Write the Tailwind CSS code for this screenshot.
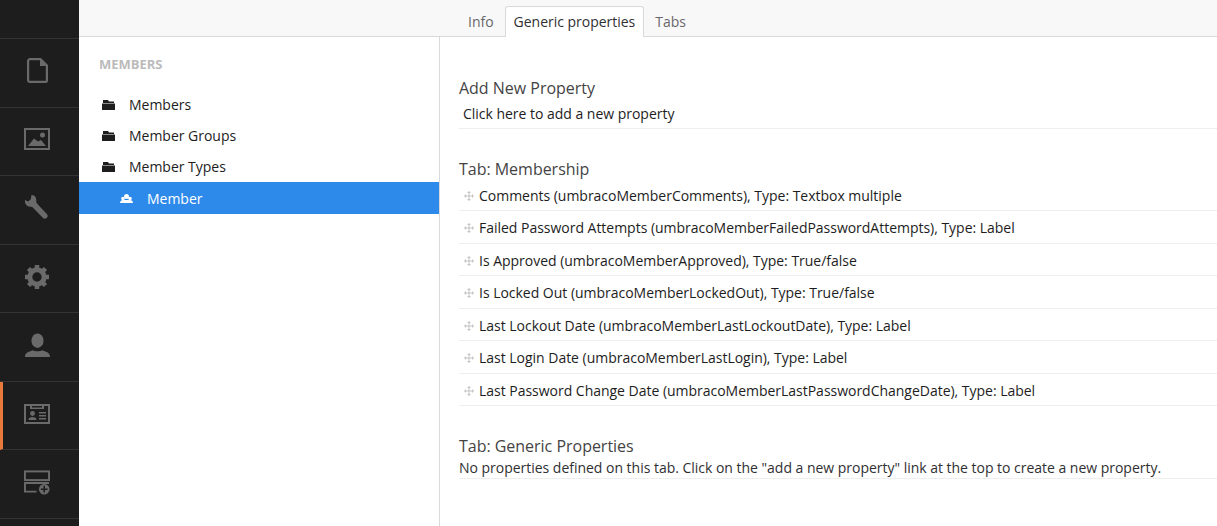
<!DOCTYPE html>
<html lang="en">
<head>
  <meta charset="UTF-8">
  <title>Member Types</title>
  <script src="https://cdn.jsdelivr.net/npm/@tailwindcss/browser@4"></script>
</head>
<body class="h-[526px] w-[1217px] overflow-hidden bg-white font-['Open_Sans',sans-serif] text-sm tracking-[-0.02px] text-[#303033]">
  <div class="flex h-full">
    <!-- Main nav -->
    <nav class="w-[79px] shrink-0 bg-[#1d1d1d] text-[#6a6a6a]">
      <div class="h-[39px] border-b border-[#333]"></div>
      <a class="flex h-[68.5px] items-center justify-center border-b border-[#333] pr-[5px] pb-[4px]">
        <svg width="21" height="25" viewBox="0 0 21 25" fill="none" stroke="currentColor" stroke-width="2.2"><path d="M3 1.100h10.500l6.400 6.400V22.500a1.400 1.400 0 0 1-1.400 1.400H3a1.900 1.900 0 0 1-1.900-1.400V3A1.900 1.900 0 0 1 3 1.100z"/><path d="M13 1.500v6.500h6.500" fill="currentColor" stroke="none"/></svg>
      </a>
      <a class="flex h-[68.5px] items-center justify-center border-b border-[#333] pr-[5px] pb-[4px]">
        <svg width="26" height="22" viewBox="0 0 26 22"><rect x="1" y="1" width="24" height="20" fill="none" stroke="currentColor" stroke-width="2"/><circle cx="18.500" cy="7" r="2.500" fill="currentColor"/><path d="M4 18l6-7.500 4 3 3-1.500 5 6z" fill="currentColor"/></svg>
      </a>
      <a class="flex h-[68.5px] items-center justify-center border-b border-[#333] pr-[5px] pb-[5px]">
        <svg width="26" height="26" viewBox="0 0 26 26" fill="currentColor"><path d="M7.500 1L6.800 5.300 4.300 7.600 1 6C.4 9.500 2.800 13 6.800 12.700c1 0 1.500.3 2.200 1L19 24c1 1 2.500 1 3.700 0s1.400-2.600.3-3.700L13 9.500c-.6-.7-.8-1.300-.7-2.200C12.500 4 11 1 7.500 1z"/></svg>
      </a>
      <a class="flex h-[68.5px] items-center justify-center border-b border-[#333] pr-[5px] pb-[2px]">
        <svg width="26" height="26" viewBox="0 0 26 26"><circle cx="13" cy="13" r="7.200" fill="none" stroke="currentColor" stroke-width="5"/><path d="M13 1v24M1 13h24M4.500 4.500l17 17M21.500 4.500l-17 17" stroke="currentColor" stroke-width="4.500" stroke-dasharray="4.500 15 4.500" fill="none"/></svg>
      </a>
      <a class="flex h-[68.5px] items-center justify-center border-b border-[#333] pr-[5px] pb-[2px]">
        <svg width="25" height="25" viewBox="0 0 26 25" fill="currentColor"><ellipse cx="13" cy="7.500" rx="6.300" ry="7.500"/><path d="M0 24.500c0-5 5-5.500 8-7 2 1.300 8 1.300 10 0 3 1.500 8 2 8 7z"/></svg>
      </a>
      <a class="flex h-[68.5px] items-center justify-center border-b border-l-[3px] border-b-[#333] border-l-[#e87b3c] pr-[8px] pb-[3px]">
        <svg width="26" height="20" viewBox="0 0 26 20" fill="currentColor"><path d="M1 1h24v18H1z" fill="none" stroke="currentColor" stroke-width="2"/><path d="M6 1h2v2.500h10V1h2v4H6z"/><circle cx="8.500" cy="9.500" r="2.400"/><path d="M4.500 16c0-2.500 2-2.500 4-3 2 .5 4 .5 4 3z"/><path d="M15 8h7v1.500h-7zM15 11h7v1.500h-7zM15 14h7v1.500h-7z"/></svg>
      </a>
      <a class="flex h-[68.5px] items-center justify-center border-b border-[#333] pr-[5px] pb-[3px]">
        <svg width="26" height="25" viewBox="0 0 27 25"><rect x="1" y="1" width="25" height="9" fill="none" stroke="currentColor" stroke-width="2"/><path d="M26 13H1v9h12" fill="none" stroke="currentColor" stroke-width="2"/><circle cx="21" cy="19.500" r="5.500" fill="currentColor"/><path d="M21 16v7M17.500 19.500h7" stroke="#1d1d1d" stroke-width="1.600"/></svg>
      </a>
    </nav>

    <div class="flex min-w-0 flex-1 flex-col">
      <!-- Tabs bar -->
      <div class="flex h-[37px] shrink-0 border-b border-[#d9d9d9] bg-[#f8f8f8]">
        <div class="w-[360px] shrink-0"></div>
        <ul class="flex items-end pl-[29px]">
          <li class="flex h-[31px] items-center pt-[2px] pr-[11px] text-[#68676b]">Info</li>
          <li class="-mb-px flex h-[31px] items-center rounded-t-[3px] border border-b-0 border-[#d9d9d9] bg-white px-2 text-[#303033]">Generic properties</li>
          <li class="flex h-[31px] items-center pt-[2px] pl-[11px] text-[#68676b]">Tabs</li>
        </ul>
      </div>

      <div class="flex min-h-0 flex-1">
        <!-- Tree -->
        <aside class="w-[361px] shrink-0 border-r border-[#d9d9d9]">
          <h5 class="pt-[19px] pl-5 text-[13px] leading-4 font-bold text-[#bbb]">MEMBERS</h5>
          <ul class="mt-[17px]">
            <li class="flex h-[31px] items-center pl-[23px]">
              <svg width="13" height="11" viewBox="0 0 13 11" fill="#1d1d1d"><path d="M1 1h5l1 1.500h5V4H1zM0 4.500h13V11H0z"/></svg>
              <span class="ml-[14px] text-[#1d1d1d]">Members</span>
            </li>
            <li class="flex h-[31px] items-center pl-[23px]">
              <svg width="13" height="11" viewBox="0 0 13 11" fill="#1d1d1d"><path d="M1 1h5l1 1.500h5V4H1zM0 4.500h13V11H0z"/></svg>
              <span class="ml-[14px] text-[#1d1d1d]">Member Groups</span>
            </li>
            <li class="flex h-[31px] items-center pl-[23px]">
              <svg width="13" height="11" viewBox="0 0 13 11" fill="#1d1d1d"><path d="M1 1h5l1 1.500h5V4H1zM0 4.500h13V11H0z"/></svg>
              <span class="ml-[14px] text-[#1d1d1d]">Member Types</span>
            </li>
            <li class="flex h-[32px] items-center bg-[#2e8aea] pt-[1px] pl-[41px] text-white">
              <svg width="13" height="9" viewBox="0 0 13 9" fill="#fff"><circle cx="6.500" cy="2.500" r="2.500"/><circle cx="3" cy="4.500" r="1.800"/><circle cx="10" cy="4.500" r="1.800"/><path d="M0 9c0-2 1.500-3 3-3h7c1.500 0 3 1 3 3z"/></svg>
              <span class="ml-[14px]">Member</span>
            </li>
          </ul>
        </aside>

        <!-- Properties -->
        <main class="min-w-0 flex-1 pl-[19px]">
          <h5 class="pt-[41px] text-base leading-5 text-[#444]">Add New Property</h5>
          <div class="flex h-[31px] items-center border-b border-[#eee] pt-[1px] pl-1 text-[#1d1d1d]">Click here to add a new property</div>

          <h5 class="pt-[30px] text-base leading-5 text-[#444]">Tab: Membership</h5>
          <ul class="-mt-[0.5px] text-[#1d1d1d]">
            <li class="flex h-[32.5px] items-center gap-[5px] border-b border-[#eee] pt-[3px] pl-[5px]"><svg width="10" height="10" viewBox="0 0 10 10" fill="none" stroke="#c4c4c4"><path d="M5 0v10M0 5h10M3.500 1.500h3M3.500 8.500h3M1.500 3.500v3M8.500 3.500v3"/></svg>Comments (umbracoMemberComments), Type: Textbox multiple</li>
            <li class="flex h-[32.5px] items-center gap-[5px] border-b border-[#eee] pt-[3px] pl-[5px]"><svg width="10" height="10" viewBox="0 0 10 10" fill="none" stroke="#c4c4c4"><path d="M5 0v10M0 5h10M3.500 1.500h3M3.500 8.500h3M1.500 3.500v3M8.500 3.500v3"/></svg>Failed Password Attempts (umbracoMemberFailedPasswordAttempts), Type: Label</li>
            <li class="flex h-[32.5px] items-center gap-[5px] border-b border-[#eee] pt-[3px] pl-[5px]"><svg width="10" height="10" viewBox="0 0 10 10" fill="none" stroke="#c4c4c4"><path d="M5 0v10M0 5h10M3.500 1.500h3M3.500 8.500h3M1.500 3.500v3M8.500 3.500v3"/></svg>Is Approved (umbracoMemberApproved), Type: True/false</li>
            <li class="flex h-[32.5px] items-center gap-[5px] border-b border-[#eee] pt-[3px] pl-[5px]"><svg width="10" height="10" viewBox="0 0 10 10" fill="none" stroke="#c4c4c4"><path d="M5 0v10M0 5h10M3.500 1.500h3M3.500 8.500h3M1.500 3.500v3M8.500 3.500v3"/></svg>Is Locked Out (umbracoMemberLockedOut), Type: True/false</li>
            <li class="flex h-[32.5px] items-center gap-[5px] border-b border-[#eee] pt-[3px] pl-[5px]"><svg width="10" height="10" viewBox="0 0 10 10" fill="none" stroke="#c4c4c4"><path d="M5 0v10M0 5h10M3.500 1.500h3M3.500 8.500h3M1.500 3.500v3M8.500 3.500v3"/></svg>Last Lockout Date (umbracoMemberLastLockoutDate), Type: Label</li>
            <li class="flex h-[32.5px] items-center gap-[5px] border-b border-[#eee] pt-[3px] pl-[5px]"><svg width="10" height="10" viewBox="0 0 10 10" fill="none" stroke="#c4c4c4"><path d="M5 0v10M0 5h10M3.500 1.500h3M3.500 8.500h3M1.500 3.500v3M8.500 3.500v3"/></svg>Last Login Date (umbracoMemberLastLogin), Type: Label</li>
            <li class="flex h-[32.5px] items-center gap-[5px] border-b border-[#eee] pt-[3px] pl-[5px]"><svg width="10" height="10" viewBox="0 0 10 10" fill="none" stroke="#c4c4c4"><path d="M5 0v10M0 5h10M3.500 1.500h3M3.500 8.500h3M1.500 3.500v3M8.500 3.500v3"/></svg>Last Password Change Date (umbracoMemberLastPasswordChangeDate), Type: Label</li>
          </ul>

          <h5 class="pt-[30px] text-base leading-5 text-[#444]">Tab: Generic Properties</h5>
          <div class="h-[23px] border-b border-[#eee] pt-[2px] leading-[19px] text-[#303033]">No properties defined on this tab. Click on the "add a new property" link at the top to create a new property.</div>
        </main>
      </div>
    </div>
  </div>
</body>
</html>
